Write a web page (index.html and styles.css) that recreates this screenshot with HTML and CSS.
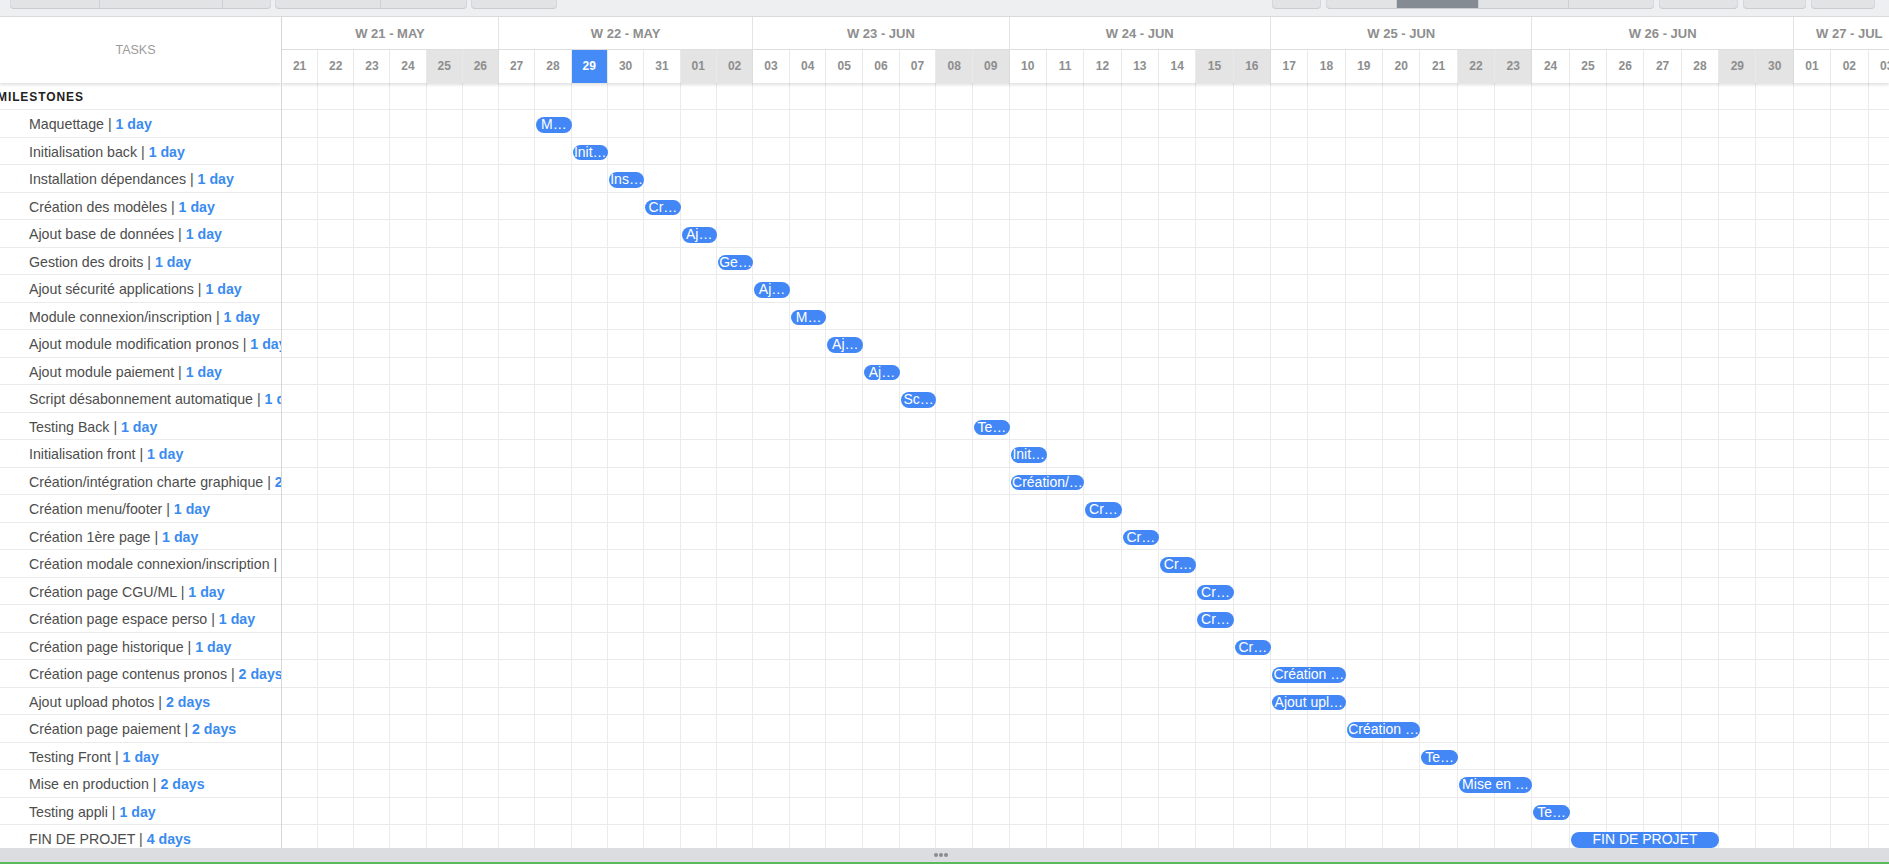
FILE: index.html
```html
<!DOCTYPE html>
<html lang="fr">
<head>
<meta charset="utf-8">
<title>Gantt</title>
<link rel="stylesheet" href="styles.css">
</head>
<body>
<div class="toolbar">
  <div class="tb-left">
    <div class="grp"><span class="seg s89"></span><span class="seg s123"></span><span class="seg s49"></span></div>
    <div class="grp"><span class="seg s105"></span><span class="seg s87"></span></div>
    <div class="grp"><span class="seg s86"></span></div>
  </div>
  <div class="tb-right">
    <div class="grp"><span class="seg s49"></span></div>
    <div class="grp"><span class="seg s70"></span><span class="seg dark s82"></span><span class="seg s90"></span><span class="seg s86"></span></div>
    <div class="grp"><span class="seg s79"></span></div>
    <div class="grp"><span class="seg s63"></span></div>
    <div class="grp"><span class="seg s64"></span></div>
  </div>
</div>

<div class="gantt">
  <div class="left">
    <div class="left-head">TASKS</div>
    <div class="left-body">
      <div class="lrow group">MILESTONES</div>
      <div class="lrow">Maquettage | <b class="dur">1 day</b></div>
      <div class="lrow">Initialisation back | <b class="dur">1 day</b></div>
      <div class="lrow">Installation dépendances | <b class="dur">1 day</b></div>
      <div class="lrow">Création des modèles | <b class="dur">1 day</b></div>
      <div class="lrow">Ajout base de données | <b class="dur">1 day</b></div>
      <div class="lrow">Gestion des droits | <b class="dur">1 day</b></div>
      <div class="lrow">Ajout sécurité applications | <b class="dur">1 day</b></div>
      <div class="lrow">Module connexion/inscription | <b class="dur">1 day</b></div>
      <div class="lrow">Ajout module modification pronos | <b class="dur">1 day</b></div>
      <div class="lrow">Ajout module paiement | <b class="dur">1 day</b></div>
      <div class="lrow">Script désabonnement automatique | <b class="dur">1 day</b></div>
      <div class="lrow">Testing Back | <b class="dur">1 day</b></div>
      <div class="lrow">Initialisation front | <b class="dur">1 day</b></div>
      <div class="lrow">Création/intégration charte graphique | <b class="dur">2 days</b></div>
      <div class="lrow">Création menu/footer | <b class="dur">1 day</b></div>
      <div class="lrow">Création 1ère page | <b class="dur">1 day</b></div>
      <div class="lrow">Création modale connexion/inscription | <b class="dur">1 day</b></div>
      <div class="lrow">Création page CGU/ML | <b class="dur">1 day</b></div>
      <div class="lrow">Création page espace perso | <b class="dur">1 day</b></div>
      <div class="lrow">Création page historique | <b class="dur">1 day</b></div>
      <div class="lrow">Création page contenus pronos | <b class="dur">2 days</b></div>
      <div class="lrow">Ajout upload photos | <b class="dur">2 days</b></div>
      <div class="lrow">Création page paiement | <b class="dur">2 days</b></div>
      <div class="lrow">Testing Front | <b class="dur">1 day</b></div>
      <div class="lrow">Mise en production | <b class="dur">2 days</b></div>
      <div class="lrow">Testing appli | <b class="dur">1 day</b></div>
      <div class="lrow">FIN DE PROJET | <b class="dur">4 days</b></div>
    </div>
  </div>

  <div class="right">
    <div class="head">
      <div class="weeks">
        <div class="wk sp6">W 21 - MAY</div>
        <div class="wk sp7">W 22 - MAY</div>
        <div class="wk sp7">W 23 - JUN</div>
        <div class="wk sp7">W 24 - JUN</div>
        <div class="wk sp7">W 25 - JUN</div>
        <div class="wk sp7">W 26 - JUN</div>
        <div class="wk sp3">W 27 - JUL</div>
      </div>
      <div class="days">
        <div class="d">21</div><div class="d">22</div><div class="d">23</div><div class="d">24</div><div class="d we">25</div><div class="d we wend">26</div>
        <div class="d">27</div><div class="d">28</div><div class="d today">29</div><div class="d">30</div><div class="d">31</div><div class="d we">01</div><div class="d we wend">02</div>
        <div class="d">03</div><div class="d">04</div><div class="d">05</div><div class="d">06</div><div class="d">07</div><div class="d we">08</div><div class="d we wend">09</div>
        <div class="d">10</div><div class="d">11</div><div class="d">12</div><div class="d">13</div><div class="d">14</div><div class="d we">15</div><div class="d we wend">16</div>
        <div class="d">17</div><div class="d">18</div><div class="d">19</div><div class="d">20</div><div class="d">21</div><div class="d we">22</div><div class="d we wend">23</div>
        <div class="d">24</div><div class="d">25</div><div class="d">26</div><div class="d">27</div><div class="d">28</div><div class="d we">29</div><div class="d we wend">30</div>
        <div class="d">01</div><div class="d">02</div><div class="d">03</div>
      </div>
    </div>

    <div class="tbody">
      <div class="vlines">
        <i></i><i></i><i></i><i></i><i></i><i></i>
        <i></i><i></i><i></i><i></i><i></i><i></i><i></i>
        <i></i><i></i><i></i><i></i><i></i><i></i><i></i>
        <i></i><i></i><i></i><i></i><i></i><i></i><i></i>
        <i></i><i></i><i></i><i></i><i></i><i></i><i></i>
        <i></i><i></i><i></i><i></i><i></i><i></i><i></i>
        <i></i><i></i><i></i>
      </div>
      <div class="trows">
        <div class="trow"></div>
        <div class="trow"><div class="bar" title="Maquettage" style="grid-column:8 / span 1">M…</div></div>
        <div class="trow"><div class="bar" title="Initialisation back" style="grid-column:9 / span 1">Init…</div></div>
        <div class="trow"><div class="bar" title="Installation dépendances" style="grid-column:10 / span 1">Ins…</div></div>
        <div class="trow"><div class="bar" title="Création des modèles" style="grid-column:11 / span 1">Cr…</div></div>
        <div class="trow"><div class="bar" title="Ajout base de données" style="grid-column:12 / span 1">Aj…</div></div>
        <div class="trow"><div class="bar" title="Gestion des droits" style="grid-column:13 / span 1">Ge…</div></div>
        <div class="trow"><div class="bar" title="Ajout sécurité applications" style="grid-column:14 / span 1">Aj…</div></div>
        <div class="trow"><div class="bar" title="Module connexion/inscription" style="grid-column:15 / span 1">M…</div></div>
        <div class="trow"><div class="bar" title="Ajout module modification pronos" style="grid-column:16 / span 1">Aj…</div></div>
        <div class="trow"><div class="bar" title="Ajout module paiement" style="grid-column:17 / span 1">Aj…</div></div>
        <div class="trow"><div class="bar" title="Script désabonnement automatique" style="grid-column:18 / span 1">Sc…</div></div>
        <div class="trow"><div class="bar" title="Testing Back" style="grid-column:20 / span 1">Te…</div></div>
        <div class="trow"><div class="bar" title="Initialisation front" style="grid-column:21 / span 1">Init…</div></div>
        <div class="trow"><div class="bar" title="Création/intégration charte graphique" style="grid-column:21 / span 2">Création/…</div></div>
        <div class="trow"><div class="bar" title="Création menu/footer" style="grid-column:23 / span 1">Cr…</div></div>
        <div class="trow"><div class="bar" title="Création 1ère page" style="grid-column:24 / span 1">Cr…</div></div>
        <div class="trow"><div class="bar" title="Création modale connexion/inscription" style="grid-column:25 / span 1">Cr…</div></div>
        <div class="trow"><div class="bar" title="Création page CGU/ML" style="grid-column:26 / span 1">Cr…</div></div>
        <div class="trow"><div class="bar" title="Création page espace perso" style="grid-column:26 / span 1">Cr…</div></div>
        <div class="trow"><div class="bar" title="Création page historique" style="grid-column:27 / span 1">Cr…</div></div>
        <div class="trow"><div class="bar" title="Création page contenus pronos" style="grid-column:28 / span 2">Création …</div></div>
        <div class="trow"><div class="bar" title="Ajout upload photos" style="grid-column:28 / span 2">Ajout upl…</div></div>
        <div class="trow"><div class="bar" title="Création page paiement" style="grid-column:30 / span 2">Création …</div></div>
        <div class="trow"><div class="bar" title="Testing Front" style="grid-column:32 / span 1">Te…</div></div>
        <div class="trow"><div class="bar" title="Mise en production" style="grid-column:33 / span 2">Mise en …</div></div>
        <div class="trow"><div class="bar" title="Testing appli" style="grid-column:35 / span 1">Te…</div></div>
        <div class="trow"><div class="bar" title="FIN DE PROJET" style="grid-column:36 / span 4">FIN DE PROJET</div></div>
      </div>
    </div>
  </div>
</div>

<div class="bottombar"><span class="dots"><i></i><i></i><i></i></span></div>
</body>
</html>
```

FILE: styles.css
```css
* { box-sizing: border-box; }
html, body { margin: 0; padding: 0; }
body {
  height: 864px;
  overflow: hidden;
  display: flex;
  flex-direction: column;
  background: #fff;
  font-family: "Liberation Sans", Arial, sans-serif;
  --cols: repeat(6, 36.17px) repeat(7, 36.33px) repeat(7, 36.64px) repeat(24, 37.35px);
}

/* toolbar */
.toolbar {
  height: 17px;
  flex: none;
  display: flex;
  padding: 0 14px 0 10px;
  background: #eeeff1;
  border-bottom: 1px solid #d9dadc;
}
.tb-left, .tb-right { display: flex; gap: 5px; align-items: flex-start; }
.tb-left { gap: 4px; }
.tb-right { margin-left: auto; }
.grp {
  display: flex;
  height: 9px;
  background: #e2e3e5;
  border-bottom: 1px solid #cbccd0;
  box-shadow: inset 1px 0 0 #d6d7da, inset -1px 0 0 #d6d7da;
  border-radius: 0 0 4px 4px;
  overflow: hidden;
}
.seg { display: block; height: 100%; border-left: 1px solid #cfd0d3; }
.seg:first-child { border-left: 0; }
.seg.dark { background: #858b92; }
.s49 { width: 49px; } .s63 { width: 63px; } .s64 { width: 64px; }
.s70 { width: 70px; } .s79 { width: 79px; } .s82 { width: 82px; }
.s86 { width: 86px; } .s87 { width: 87px; } .s89 { width: 89px; }
.s90 { width: 90px; } .s105 { width: 105px; } .s123 { width: 123px; }

/* gantt */
.gantt { flex: 1; min-height: 0; display: flex; overflow: hidden; }

.left {
  width: 282px;
  flex: none;
  border-right: 1px solid #d6d6d6;
  display: flex;
  flex-direction: column;
  overflow: hidden;
}
.left-head {
  height: 65.5px;
  flex: none;
  display: flex;
  align-items: center;
  justify-content: center;
  padding: 0 10px 0 0;
  font-size: 12.5px;
  color: #9b9b9b;
  background: #fff;
  position: relative;
  z-index: 1;
  box-shadow: 0 2px 3px rgba(0, 0, 0, 0.12);
}
.lrow {
  height: 27.5px;
  line-height: 28.5px;
  border-bottom: 1px solid #ebebeb;
  padding-left: 29px;
  font-size: 14.2px;
  color: #4d4d4d;
  white-space: nowrap;
  overflow: hidden;
}
.lrow.group {
  padding-left: 0;
  text-indent: -3px;
  font-size: 12px;
  font-weight: bold;
  letter-spacing: 0.9px;
  color: #222;
}
.dur { color: #3a8bf0; font-weight: bold; }

.right { flex: 1; min-width: 0; display: flex; flex-direction: column; overflow: hidden; }
.head {
  flex: none;
  background: #fff;
  position: relative;
  z-index: 1;
  box-shadow: 0 2px 3px rgba(0, 0, 0, 0.12);
}
.weeks, .days, .vlines, .trow {
  display: grid;
  grid-template-columns: var(--cols);
  width: max-content;
}
.weeks { height: 33px; border-bottom: 1px solid #dedede; }
.wk {
  display: flex;
  align-items: center;
  justify-content: center;
  border-right: 1px solid #e4e4e4;
  font-size: 13px;
  font-weight: bold;
  color: #8e8e8e;
  white-space: nowrap;
}
.sp6 { grid-column: span 6; }
.sp7 { grid-column: span 7; }
.sp3 { grid-column: span 3; }
.days { height: 32.5px; }
.d {
  display: flex;
  align-items: center;
  justify-content: center;
  border-right: 1px solid #e9e9e9;
  font-size: 12px;
  font-weight: bold;
  color: #8e8e8e;
}
.d.we { background: #e4e4e4; }
.d.wend { border-right-color: #dcdcdc; }
.d.today { background: #458bf8; color: #fff; }

.tbody { flex: 1; min-height: 0; display: grid; overflow: hidden; }
.vlines, .trows { grid-area: 1 / 1; }
.vlines i { display: block; border-right: 1px solid #ebebeb; }
.trow { height: 27.5px; border-bottom: 1px solid #ebebeb; }
.bar {
  margin: 7px 0 0 1px;
  height: 15.5px;
  line-height: 15.5px;
  border-radius: 8px;
  background: #4287f5;
  color: #fff;
  font-size: 14px;
  text-align: center;
  white-space: nowrap;
  overflow: hidden;
}

/* bottom bar */
.bottombar {
  height: 16px;
  flex: none;
  background: #dcdde0;
  border-bottom: 2px solid #5cb85c;
  display: flex;
  align-items: center;
  justify-content: center;
}
.dots { display: flex; gap: 1px; margin-right: 8px; }
.dots i { display: block; width: 4px; height: 4px; border-radius: 50%; background: #8b8b8b; }
```
